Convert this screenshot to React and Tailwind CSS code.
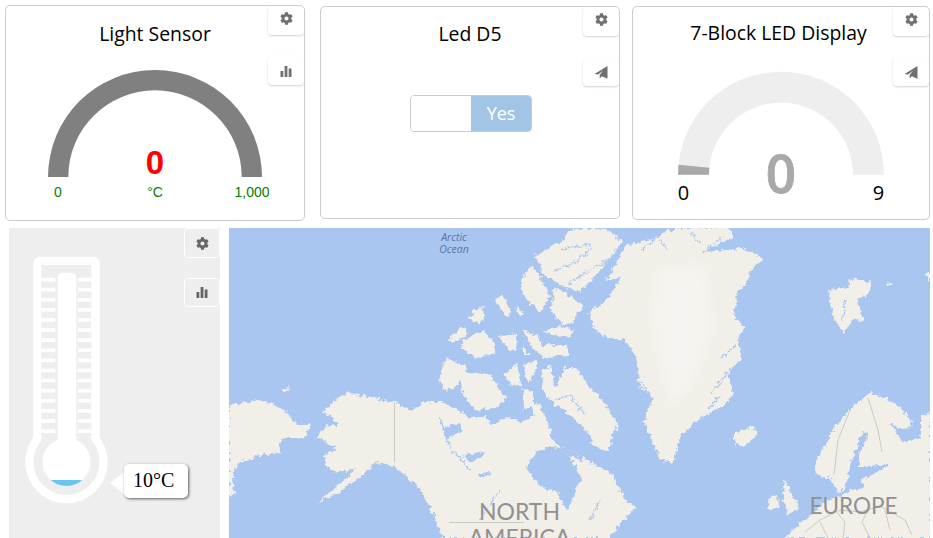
import React from "react";
import { FaCog } from "react-icons/fa";

const BarsIcon = () => (
  <svg width="12" height="11" viewBox="0 0 12 11" fill="currentColor">
    <rect x="0.5" y="5" width="2.8" height="6" />
    <rect x="4.6" y="0" width="2.8" height="11" />
    <rect x="8.7" y="2.5" width="2.8" height="8.5" />
  </svg>
);

const PlaneIcon = () => (
  <svg width="14" height="13" viewBox="0 0 14 13" fill="currentColor">
    <path d="M13.5 0 L0.5 8 L4.3 8.4 L9 4.6 L5.6 9.2 L5.8 12.6 L7.8 10.2 L13.5 12.8 Z" />
  </svg>
);

// small tab buttons hanging on the right edge of every widget
const WidgetTools = ({ second }) => {
  const tab = "w-[36px] h-[29px] bg-white rounded-[4px] flex items-center justify-center text-[#707070] shadow-[0_1px_2px_rgba(0,0,0,0.18)]";
  return (
    <div className="absolute top-0 right-0 flex flex-col gap-[21px]">
      <div className={`${tab} pb-[5px]`}>
        <FaCog size={13} />
      </div>
      <div className={`${tab} pt-[1px]`}>{second}</div>
    </div>
  );
};

const Thermometer = () => {
  const ticks = Array.from({ length: 16 }, (_, i) => 277.7 + i * 10.1);
  return (
    <svg viewBox="24 250 90 258" className="block w-[90px] h-[258px] mt-[22px] ml-[15px]">
      <rect x="33.2" y="256.8" width="66.6" height="190" rx="7" fill="#fff" />
      <circle cx="66.5" cy="462" r="41.3" fill="#fff" />
      <rect x="41.3" y="265" width="50" height="180" fill="#eeeeee" />
      <circle cx="66.5" cy="462" r="33" fill="#eeeeee" />
      {ticks.map((y) => (
        <g key={y} fill="#fff">
          <rect x="41.3" y={y} width="14" height="3.7" />
          <rect x="78" y={y} width="13.3" height="3.7" />
        </g>
      ))}
      <rect x="57.7" y="272.7" width="18.6" height="180" rx="5" fill="#fff" />
      <circle cx="66.5" cy="462" r="24" fill="#fff" />
      <clipPath id="bulb">
        <circle cx="66.5" cy="462" r="24" />
      </clipPath>
      <rect x="40" y="480" width="54" height="10" fill="#6cc5ee" clipPath="url(#bulb)" />
    </svg>
  );
};

const land = [
  "229,405 249,402 257,400 272,403 287,412 297,425 311,425 304,438 284,438 279,445 281,453 261,455 239,463 232,478 234,492 229,497",
  "281,390 287,387 291,390 286,392",
  "319,433 329,425 339,425 324,412 332,402 349,393 369,397 394,402 411,410 426,402 442,402 462,412 469,417 486,417 491,425 506,417 522,422 534,415 531,405 539,403 549,425 551,438 562,448 581,455 594,465 611,472 624,498 636,508 621,522 609,538 442,538 434,515 419,488 396,468 376,462 362,475 339,492 317,503 347,478 356,468 336,473 326,465 324,455 337,448 319,438",
  "535,256 553,245 563,241 570,230 587,228 607,230 622,241 610,258 597,275 580,291 567,288 555,281 543,275 540,265",
  "522,278 532,265 540,278 550,296 540,312 527,300 522,291",
  "552,288 562,291 573,298 583,305 572,323 563,325 549,308 555,298",
  "495,298 503,296 512,313 508,317 500,308",
  "517,306 524,315 518,315",
  "473,310 483,306 484,319 478,324 470,318",
  "448,340 465,325 467,335 453,343",
  "462,341 483,331 495,343 495,353 475,358 462,348",
  "498,336 516,333 517,351 508,350",
  "522,330 538,336 542,345 568,345 568,356 543,358 533,348",
  "542,331 560,326 574,330 571,337 553,335",
  "523,346 530,355 523,356",
  "439,380 446,358 467,367 456,388 446,390",
  "459,372 489,373 506,398 496,408 474,410 462,392",
  "503,375 517,364 521,385 512,386",
  "523,365 537,361 535,373 528,383",
  "522,388 532,391 535,408 523,408",
  "542,371 550,365 555,388 565,368 577,368 588,386 603,401 618,425 612,437 609,452 595,447 586,430 570,415 550,400 543,391",
  "626,245 651,240 668,230 680,228 728,228 734,237 703,252 728,250 741,248 754,253 763,260 749,272 748,283 738,290 734,315 744,328 738,338 741,358 728,372 733,395 724,405 701,418 681,435 673,463 661,460 651,438 644,422 653,398 639,385 636,355 624,340 606,338 594,328 589,312 606,300 621,277 606,282 614,268",
  "828,290 848,287 851,278 873,283 866,297 856,300 864,322 854,318 844,333 834,318",
  "886,283 891,282 891,285 887,286",
  "924,275 930,273 930,282",
  "734,433 753,427 758,435 744,447 734,443",
  "814,465 834,428 854,405 871,393 883,397 898,405 913,422 906,430 889,423 903,442 921,438 921,415 930,412 930,538 784,538 801,522 814,512 824,502 844,495 853,488 838,492 829,478 821,478 814,472",
  "784,478 789,488 799,508 788,515 783,498",
  "769,498 778,495 779,507 769,510",
];

const water = [
  "526,468 536,452 549,447 569,455 581,478 572,502 566,510 557,492 539,485",
  "549,447 562,448 581,455 585,462 569,455",
  "441,428 459,423 461,432 446,438",
  "462,455 486,452 472,463",
  "477,475 494,472 482,478",
  "851,462 863,432 868,433 859,455 859,468 879,465 889,465 878,472 861,480 864,488 853,490 844,492 848,478",
];

// channels and fjords, drawn in the sea colour over the land
const fjords = [
  "M553 272 L575 262 L592 248",
  "M568 284 L590 270 L612 258",
  "M560 250 L590 244",
  "M552 283 L568 290 L582 293",
  "M640 250 L660 236",
  "M703 252 L722 238",
  "M660 240 L668 250",
  "M690 232 L700 244",
  "M440 418 L452 450 L470 470",
  "M728 372 L712 392",
  "M735 345 L722 358",
  "M720 395 L708 410",
  "M555 400 L570 395 L585 415",
  "M480 520 L500 490",
  "M600 500 L590 520",
  "M640 380 L650 395",
  "M846 300 L842 322",
];

const borders = [
  "M394.5 402 L394.5 462",
  "M449 522.5 L524 522.5",
  "M850 410 L838 440 L834 475",
  "M868 398 L878 430 L882 452",
  "M805 532 L820 520 L840 510 L860 512 L880 506 L905 520 L912 535",
  "M835 510 L845 522 L843 538",
  "M868 510 L862 522 L870 538",
  "M820 522 L828 538",
  "M885 510 L890 530",
];

const WorldMap = () => (
  <svg viewBox="229 228 701 310" className="block w-full h-full bg-[#a9c6f0]">
    <defs>
      <filter id="coast" x="-5%" y="-5%" width="110%" height="110%">
        <feTurbulence type="fractalNoise" baseFrequency="0.24" numOctaves="3" seed="4" />
        <feDisplacementMap in="SourceGraphic" scale="7" xChannelSelector="R" yChannelSelector="G" />
        <feGaussianBlur stdDeviation="0.4" />
      </filter>
      <filter id="soft">
        <feGaussianBlur stdDeviation="6" />
      </filter>
    </defs>
    <g filter="url(#coast)">
      <g fill="#f2efe9">
        {land.map((p) => (
          <polygon key={p} points={p} />
        ))}
      </g>
      <g fill="#a9c6f0">
        {water.map((p) => (
          <polygon key={p} points={p} />
        ))}
      </g>
      <g fill="none" stroke="#a9c6f0" strokeWidth="1.3">
        {fjords.map((d) => (
          <path key={d} d={d} />
        ))}
      </g>
    </g>
    {/* ice sheet is a touch lighter than the rest of the land */}
    <polygon points="655,270 705,265 712,330 692,385 672,405 662,370 652,320" fill="#f5f4f0" filter="url(#soft)" />
    <g fill="none" stroke="#bdbab4" strokeWidth="0.7">
      {borders.map((d) => (
        <path key={d} d={d} />
      ))}
    </g>
    <g className="font-['Open_Sans',sans-serif] italic text-[10.5px] fill-[#5b75a8]" textAnchor="middle">
      <text x="454" y="241">Arctic</text>
      <text x="454" y="253">Ocean</text>
    </g>
    <g className="font-['Lato',sans-serif] text-[23px] fill-[#919191]" textAnchor="middle">
      <text x="519.5" y="520">NORTH</text>
      <text x="519.5" y="546">AMERICA</text>
    </g>
    <text x="853.5" y="514" textAnchor="middle" className="font-['Lato',sans-serif] text-[22.5px] fill-[#919191]">EUROPE</text>
  </svg>
);

export default function App() {
  return (
    <div className="w-[933px] h-[538px] overflow-hidden bg-white flex flex-col font-['Open_Sans',sans-serif] text-black">
      <div className="h-[228px] flex items-start pl-[5px]">
        <div className="relative w-[300px] h-[216px] mt-[5px] border border-[#cccccc] rounded-[5px] overflow-hidden">
          <div className="h-[44px] pt-[15px] text-center text-[19.4px] leading-[26px]">Light Sensor</div>
          <svg viewBox="6 50 298 170" className="block w-[298px] h-[170px]">
            <path d="M48 177 A107 107 0 0 1 262 177 L241.7 177 A86.7 86.7 0 0 0 68.3 177 Z" fill="#808080" />
            <g className="font-['Liberation_Sans',sans-serif] text-[14px] fill-[#008000]" textAnchor="middle">
              <text x="58" y="197">0</text>
              <text x="155" y="197">°C</text>
              <text x="252" y="197">1,000</text>
            </g>
            <text x="155" y="174" textAnchor="middle" className="font-['Liberation_Sans',sans-serif] font-bold text-[33px] fill-[#ff0000]">0</text>
          </svg>
          <WidgetTools second={<BarsIcon />} />
        </div>

        <div className="relative w-[300px] h-[213px] mt-[6px] ml-[15px] border border-[#cccccc] rounded-[5px] overflow-hidden">
          <div className="h-[44px] pt-[14px] text-center text-[19.4px] leading-[26px]">Led D5</div>
          <div className="flex w-[122px] h-[37px] mt-[44px] ml-[89px] border border-[#cccccc] rounded-[4px] overflow-hidden">
            <div className="w-[60px] bg-white"></div>
            <div className="flex-1 bg-[#a2c5e5] text-white text-[18px] flex items-center justify-center">Yes</div>
          </div>
          <WidgetTools second={<PlaneIcon />} />
        </div>

        <div className="relative w-[298px] h-[214px] mt-[6px] ml-[12px] border border-[#cccccc] rounded-[5px] overflow-hidden">
          <div className="h-[44px] pt-[13px] pr-[5px] text-center text-[19.4px] leading-[26px]">7-Block LED Display</div>
          <svg viewBox="633 51 296 168" className="block w-[296px] h-[168px]">
            <path d="M678 174.7 A103 103 0 0 1 884 174.7 L853 174.7 A72 72 0 0 0 709 174.7 Z" fill="#eeeeee" />
            <path d="M678 174.7 L678.5 164.7 L709.3 167.7 L709 174.7 Z" fill="#a9a9a9" />
            <g className="text-[20px] fill-black" textAnchor="middle">
              <text x="683.5" y="200">0</text>
              <text x="878.5" y="200">9</text>
            </g>
            <text x="781" y="192.7" textAnchor="middle" className="font-semibold text-[53px] fill-[#a9a9a9] stroke-[#a9a9a9] stroke-[0.8px]">0</text>
          </svg>
          <WidgetTools second={<PlaneIcon />} />
        </div>
      </div>

      <div className="h-[310px] flex pl-[9px] gap-[9px]">
        <div className="relative w-[211px] h-full bg-[#eeeeee]">
          <Thermometer />
          <div className="absolute top-0 right-0 flex flex-col gap-[20px]">
            <div className="w-[36px] h-[30px] bg-[#eeeeee] border border-white rounded-[4px] flex items-center justify-center text-[#666]">
              <FaCog size={13} />
            </div>
            <div className="w-[36px] h-[29px] bg-[#eeeeee] border border-white rounded-[4px] flex items-center justify-center text-[#666]">
              <BarsIcon />
            </div>
          </div>
          <div className="absolute left-[101px] top-[244px] w-0 h-0 border-y-[11px] border-y-transparent border-r-[14px] border-r-white"></div>
          <div className="absolute left-[115px] top-[236px] w-[64px] h-[34px] bg-white rounded-[5px] shadow-[1px_1px_3px_rgba(0,0,0,0.6)] font-['Liberation_Serif',serif] text-[20px] leading-[32px] pl-[9px]">
            10°C
          </div>
        </div>
        <div className="w-[701px] h-full overflow-hidden">
          <WorldMap />
        </div>
      </div>
    </div>
  );
}
